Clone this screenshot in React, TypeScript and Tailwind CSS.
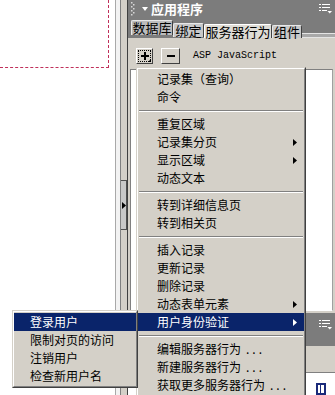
import React from 'react'

type MenuEntry = {
  label?: string
  sep?: boolean
  arrow?: boolean
  active?: boolean
  dots?: boolean
}

const mainMenu: MenuEntry[] = [
  { label: '记录集（查询）' },
  { label: '命令' },
  { sep: true },
  { label: '重复区域' },
  { label: '记录集分页', arrow: true },
  { label: '显示区域', arrow: true },
  { label: '动态文本' },
  { sep: true },
  { label: '转到详细信息页' },
  { label: '转到相关页' },
  { sep: true },
  { label: '插入记录' },
  { label: '更新记录' },
  { label: '删除记录' },
  { label: '动态表单元素', arrow: true },
  { label: '用户身份验证', arrow: true, active: true },
  { sep: true },
  { label: '编辑服务器行为', dots: true },
  { label: '新建服务器行为', dots: true },
  { label: '获取更多服务器行为', dots: true },
]

const subMenu: MenuEntry[] = [
  { label: '登录用户', active: true },
  { label: '限制对页的访问' },
  { label: '注销用户' },
  { label: '检查新用户名' },
]

function Gripper() {
  return (
    <svg width="4" height="14" viewBox="0 0 4 14" className="ml-[3px]">
      {[0, 1, 2, 3, 4, 5, 6].map(i => (
        <rect key={i} x={i % 2 === 0 ? 0 : 2} y={i * 2} width="1.5" height="1.5" fill="#d8d8d8" />
      ))}
    </svg>
  )
}

function OptionsIcon() {
  return (
    <svg width="13" height="11" viewBox="0 0 13 11" fill="#ffffff">
      <rect x="0" y="1" width="2" height="1" />
      <rect x="3" y="1" width="8" height="1" />
      <rect x="0" y="4" width="2" height="1" />
      <rect x="3" y="4" width="8" height="1" />
      <rect x="0" y="7" width="2" height="1" />
      <rect x="3" y="7" width="5" height="1" />
      <polygon points="8.5,8 13,8 10.75,10.5" />
    </svg>
  )
}

function Arrow({ white }: { white?: boolean }) {
  return (
    <svg width="4" height="7" viewBox="0 0 4 7">
      <polygon points="0,0 4,3.5 0,7" fill={white ? '#ffffff' : '#000000'} />
    </svg>
  )
}

// classic raised 3D frame used by menus
function Frame({ children, className }: { children: React.ReactNode; className?: string }) {
  return (
    <div className={`border border-t-[#d4d0c8] border-l-[#d4d0c8] border-r-[#404040] border-b-[#404040] ${className ?? ''}`}>
      <div className="border border-t-white border-l-white border-r-[#808080] border-b-[#808080] bg-[#d4d0c8] py-[1px]">
        {children}
      </div>
    </div>
  )
}

function MenuList({ items, pad }: { items: MenuEntry[]; pad: string }) {
  return (
    <>
      {items.map((it, i) =>
        it.sep ? (
          <div key={i} className="flex h-[9px] items-center px-[1px]">
            <div className="h-[2px] w-full border-t border-t-[#808080] border-b border-b-white" />
          </div>
        ) : (
          <div
            key={i}
            className={`flex h-[18px] items-center pr-[7px] text-[12px] leading-none ${pad} ${
              it.active ? 'bg-[#0a246a] text-white' : 'text-black'
            }`}
          >
            <span className="flex-1 whitespace-nowrap">
              {it.label}
              {it.dots && <span className="ml-[5px] tracking-[3px]">...</span>}
            </span>
            {it.arrow && <Arrow white={it.active} />}
          </div>
        )
      )}
    </>
  )
}

export default function App() {
  return (
    <div className="relative flex h-[395px] w-[335px] overflow-hidden bg-white font-['Noto_Sans_CJK_SC','Noto_Sans',sans-serif]">
      {/* document canvas */}
      <div className="w-[115px] shrink-0 bg-white">
        <div className="h-[68px] w-[109px] border-r border-b border-dashed border-[#c0305a]" />
      </div>

      {/* splitter */}
      <div className="flex w-[13px] shrink-0">
        <div className="w-px bg-[#a8a8a8]" />
        <div className="w-[4px] bg-[#f2f2f2]" />
        <div className="w-px bg-[#808080]" />
        <div className="w-[6px] bg-[#d4d0c8] pt-[180px]">
          <div className="flex h-[50px] items-center border-y border-r border-[#505050] bg-[#c8c8c8] pl-[1px]">
            <Arrow />
          </div>
        </div>
        <div className="w-px bg-[#404040]" />
      </div>

      {/* application panel */}
      <div className="flex w-[207px] shrink-0 flex-col bg-[#d4d0c8]">
        <div className="flex h-[18px] items-center bg-[#7c7c7c]">
          <Gripper />
          <svg width="6" height="4" viewBox="0 0 6 4" className="ml-[7px]">
            <polygon points="0,0 6,0 3,4" fill="#ffffff" />
          </svg>
          <span className="ml-[3px] text-[13px] font-bold leading-none text-white">应用程序</span>
          <div className="flex-1" />
          <div className="mr-[3px]">
            <OptionsIcon />
          </div>
        </div>

        {/* tabs */}
        <div className="flex h-[20px] items-start bg-[#7c7c7c] pl-[3px] text-[13px] leading-none text-black">
          <div className="mt-[2px] flex h-[15px] w-[42px] items-center justify-center rounded-t-[2px] border-t border-l border-r border-t-[#e8e8e8] border-l-[#e8e8e8] border-r-[#404040] bg-[#bcbcbc]">
            数据库
          </div>
          <div className="mt-[5px] flex h-[14px] w-[31px] items-center justify-center rounded-t-[2px] border-t border-l border-r border-t-[#e8e8e8] border-l-[#e8e8e8] border-r-[#404040] bg-[#c8c8c8]">
            绑定
          </div>
          <div className="mt-[6px] flex h-[14px] w-[68px] items-center justify-center rounded-t-[2px] border-t border-l border-r border-t-white border-l-white border-r-[#404040] bg-[#dedcd6]">
            服务器行为
          </div>
          <div className="mt-[7px] flex h-[13px] w-[30px] items-center justify-center rounded-t-[2px] border-t border-l border-r border-t-[#e8e8e8] border-l-[#e8e8e8] border-r-[#404040] bg-[#c8c8c8]">
            组件
          </div>
          <div className="h-[5px] flex-1 self-end border-t border-b border-t-[#e4e4e4] border-b-[#e4e4e4] bg-[#a8a8a8]" />
        </div>

        {/* toolbar */}
        <div className="flex h-[31px] items-start pl-[8px] pt-[10px]">
          <div className="relative flex h-[16px] w-[17px] items-center justify-center border border-t-white border-l-white border-r-[#404040] border-b-[#404040]">
            <div className="flex h-[12px] w-[13px] items-center justify-center border border-dotted border-black">
              <svg width="8" height="8" viewBox="0 0 8 8" fill="#000000">
                <rect x="0" y="3" width="8" height="2" />
                <rect x="3" y="0" width="2" height="8" />
              </svg>
            </div>
            <svg width="3" height="3" viewBox="0 0 3 3" className="absolute right-[1px] bottom-[1px]">
              <polygon points="0,3 3,0 3,3" fill="#000000" />
            </svg>
          </div>
          <div className="ml-[8px] flex h-[16px] w-[19px] items-center justify-center border border-t-white border-l-white border-r-[#404040] border-b-[#404040]">
            <div className="h-[2px] w-[8px] bg-black" />
          </div>
          <span className="ml-[13px] font-['Liberation_Mono',monospace] text-[10px] leading-[16px] text-black">
            ASP JavaScript
          </span>
        </div>

        {/* list */}
        <div className="mx-[2px] h-[244px] border border-t-[#808080] border-l-[#808080] border-r-[#a0a0a0] border-b-white bg-white" />

        <div className="h-[2px]" />
        <div className="flex h-[34px] items-start justify-end bg-[#7c7c7c] pr-[3px] pt-[6px]">
          <OptionsIcon />
        </div>
        <div className="h-[26px]" />
        <div className="h-px bg-[#808080]" />
        <div className="flex-1 bg-white pl-[188px] pt-[10px]">
          <div className="flex h-[12px] w-[10px] border-2 border-[#1a2a7a] bg-white">
            <div className="ml-[2px] w-px bg-[#1a2a7a]" />
          </div>
        </div>
      </div>

      {/* context menu */}
      <Frame className="absolute left-[136px] top-[67px] w-[170px]">
        <MenuList items={mainMenu} pad="pl-[19px]" />
      </Frame>

      {/* submenu */}
      <Frame className="absolute left-[12px] top-[310px] w-[126px]">
        <MenuList items={subMenu} pad="pl-[16px]" />
      </Frame>
    </div>
  )
}
